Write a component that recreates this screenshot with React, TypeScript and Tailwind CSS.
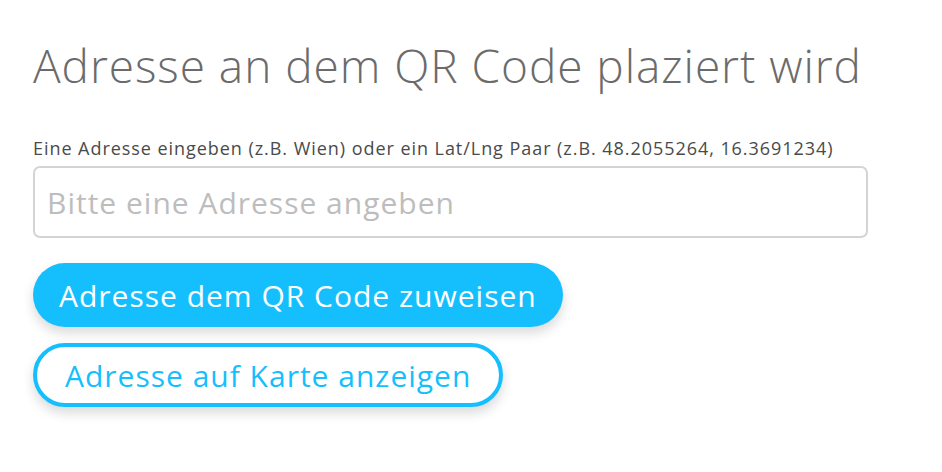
import React from "react";

const App = () => {
	return (
		<div
			className="min-h-screen bg-white pl-[33px] pt-[35px]"
			style={{ fontFamily: '"Open Sans", sans-serif' }}
		>
			<h1 className="text-[46px] font-light leading-[60px] tracking-[0.95px] text-[#6b6b6b]">
				Adresse an dem QR Code plaziert wird
			</h1>
			<label className="mt-[41px] block text-[18px] leading-[24px] tracking-[0.95px] text-[#4a4a4a]">
				Eine Adresse eingeben (z.B. Wien) oder ein Lat/Lng Paar (z.B. 48.2055264, 16.3691234)
			</label>
			<input
				type="text"
				placeholder="Bitte eine Adresse angeben"
				className="mt-[6px] block h-[72px] w-[835px] rounded-[7px] border-2 border-[#d4d4d4] px-[12px] text-[30px] tracking-[1px] text-[#444] outline-none placeholder:text-[#bdbdbd]"
			/>
			<div className="mt-[25px] flex flex-col items-start gap-[16px]">
				<button className="h-[64px] rounded-full bg-[#15bffd] px-[26px] text-[30px] tracking-[1px] text-white shadow-[0_6px_12px_rgba(0,0,0,0.15)]">
					Adresse dem QR Code zuweisen
				</button>
				<button className="h-[64px] rounded-full border-[4px] border-[#15bffd] bg-white px-[28px] text-[30px] tracking-[1px] text-[#15bffd] shadow-[0_6px_12px_rgba(0,0,0,0.15)]">
					Adresse auf Karte anzeigen
				</button>
			</div>
		</div>
	);
};

export default App;
